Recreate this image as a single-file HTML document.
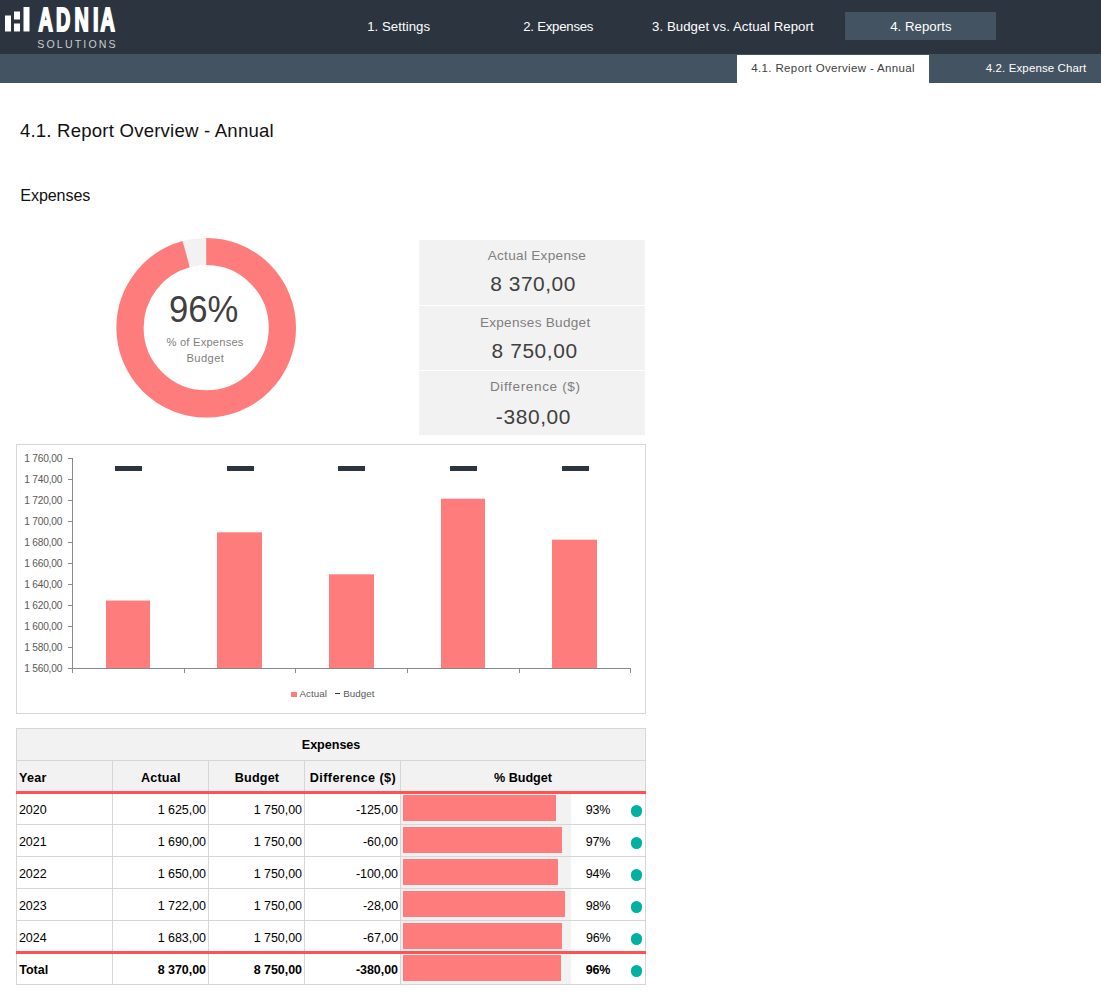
<!DOCTYPE html>
<html lang="en">
<head>
<meta charset="utf-8">
<title>4.1. Report Overview - Annual</title>
<style>
html,body{margin:0;padding:0;background:#fff;}
body{position:relative;width:1101px;height:999px;overflow:hidden;font-family:"Liberation Sans", sans-serif;color:#000;}
.r{position:absolute;display:block;}
.t{position:absolute;white-space:nowrap;line-height:1;}
</style>
</head>
<body>
<div class="r" style="left:0px;top:0px;width:1101px;height:54px;background:#2C353F;"></div>
<div class="r" style="left:0px;top:54px;width:1101px;height:29px;background:#445361;"></div>
<div class="r" style="left:845px;top:12px;width:151px;height:28px;background:#445361;"></div>
<div class="r" style="left:737px;top:55px;width:192px;height:28px;background:#FFFFFF;"></div>
<svg class="r" style="left:0;top:0" width="130" height="54" viewBox="0 0 130 54">
<rect x="5" y="15.5" width="6" height="16" fill="#fff"/>
<rect x="14" y="11.5" width="6" height="8" fill="#fff"/>
<rect x="14" y="23.5" width="6" height="8" fill="#fff"/>
<rect x="23.5" y="7" width="6" height="24.5" fill="#fff"/>
<text transform="scale(0.6 1)" x="64.3 93.5 124 154.9 167.4" y="30.6" font-family='"Liberation Sans", sans-serif' font-weight="700" font-size="33" fill="#fff" stroke="#fff" stroke-width="1.8" stroke-linejoin="miter" vector-effect="non-scaling-stroke">ADNIA</text>
<text x="37.2" y="47.8" font-family='"Liberation Sans", sans-serif' font-size="10.6" fill="#C9CCCF" textLength="78.5" lengthAdjust="spacing">SOLUTIONS</text>
</svg>
<div class="t" style="left:367.14px;top:20px;font-size:13.2px;color:#fff;letter-spacing:0.057px;">1. Settings</div>
<div class="t" style="left:523.19px;top:20px;font-size:13.2px;color:#fff;letter-spacing:-0.231px;">2. Expenses</div>
<div class="t" style="left:652.12px;top:20px;font-size:13.2px;color:#fff;letter-spacing:0.063px;">3. Budget vs. Actual Report</div>
<div class="t" style="left:890.13px;top:20px;font-size:13.2px;color:#fff;letter-spacing:0.065px;">4. Reports</div>
<div class="t" style="left:751.32px;top:63px;font-size:11.5px;color:#404040;letter-spacing:0.355px;">4.1. Report Overview - Annual</div>
<div class="t" style="left:985.77px;top:63px;font-size:11.5px;color:#fff;letter-spacing:0.116px;">4.2. Expense Chart</div>
<div class="t" style="left:19.88px;top:122px;font-size:18.6px;color:#111;letter-spacing:0.205px;">4.1. Report Overview - Annual</div>
<div class="t" style="left:20.30px;top:187px;font-size:16.1px;color:#111;letter-spacing:-0.096px;">Expenses</div>
<svg class="r" style="left:100px;top:225px" width="220" height="205" viewBox="100 225 220 205">
<circle cx="206.2" cy="327.7" r="76.20" fill="none" stroke="#F2F2F2" stroke-width="27.20"/>
<circle cx="206.2" cy="327.7" r="76.20" fill="none" stroke="#FF7C7C" stroke-width="27.20" stroke-dasharray="457.71 478.78" transform="rotate(-90 206.2 327.7)"/>
</svg>
<div class="t" style="left:168.85px;top:291px;font-size:37px;color:#404040;transform:scaleX(0.9369);transform-origin:0 0;">96%</div>
<div class="t" style="left:166.50px;top:337px;font-size:11.2px;color:#7F7F7F;letter-spacing:0.195px;">% of Expenses</div>
<div class="t" style="left:186.40px;top:353px;font-size:11.2px;color:#7F7F7F;letter-spacing:0.417px;">Budget</div>
<div class="r" style="left:419px;top:240px;width:226px;height:195px;background:#F2F2F2;"></div>
<div class="r" style="left:419px;top:305px;width:226px;height:1px;background:#fff;"></div>
<div class="r" style="left:419px;top:370px;width:226px;height:1px;background:#fff;"></div>
<div class="t" style="left:487.70px;top:249px;font-size:13.6px;color:#7F7F7F;letter-spacing:0.286px;">Actual Expense</div>
<div class="t" style="left:490.18px;top:274px;font-size:20.9px;color:#404040;letter-spacing:0.558px;">8 370,00</div>
<div class="t" style="left:479.88px;top:316px;font-size:13.6px;color:#7F7F7F;letter-spacing:0.270px;">Expenses Budget</div>
<div class="t" style="left:491.61px;top:341px;font-size:20.9px;color:#404040;letter-spacing:0.588px;">8 750,00</div>
<div class="t" style="left:489.88px;top:380px;font-size:13.6px;color:#7F7F7F;letter-spacing:0.615px;">Difference ($)</div>
<div class="t" style="left:495.87px;top:407px;font-size:20.9px;color:#404040;letter-spacing:0.618px;">-380,00</div>
<div class="r" style="left:16px;top:444px;width:628px;height:268px;border:1px solid #D6D6D6;background:#fff"></div>
<svg class="r" style="left:0;top:440px" width="660" height="280" viewBox="0 440 660 280" shape-rendering="crispEdges">
<rect x="106" y="600.55" width="44" height="67.95" fill="#FF7C7C" shape-rendering="auto"/>
<rect x="115" y="466" width="27" height="5" fill="#2C353F"/>
<rect x="217" y="532.30" width="45" height="136.20" fill="#FF7C7C" shape-rendering="auto"/>
<rect x="227" y="466" width="27" height="5" fill="#2C353F"/>
<rect x="329" y="574.30" width="45" height="94.20" fill="#FF7C7C" shape-rendering="auto"/>
<rect x="338" y="466" width="27" height="5" fill="#2C353F"/>
<rect x="441" y="498.70" width="44" height="169.80" fill="#FF7C7C" shape-rendering="auto"/>
<rect x="450" y="466" width="27" height="5" fill="#2C353F"/>
<rect x="552" y="539.65" width="45" height="128.85" fill="#FF7C7C" shape-rendering="auto"/>
<rect x="562" y="466" width="27" height="5" fill="#2C353F"/>
<rect x="72" y="458" width="1" height="211" fill="#8A8A8A"/>
<rect x="72" y="668" width="559" height="1" fill="#8A8A8A"/>
<rect x="68" y="458" width="4" height="1" fill="#8A8A8A"/>
<rect x="68" y="479" width="4" height="1" fill="#8A8A8A"/>
<rect x="68" y="500" width="4" height="1" fill="#8A8A8A"/>
<rect x="68" y="521" width="4" height="1" fill="#8A8A8A"/>
<rect x="68" y="542" width="4" height="1" fill="#8A8A8A"/>
<rect x="68" y="563" width="4" height="1" fill="#8A8A8A"/>
<rect x="68" y="584" width="4" height="1" fill="#8A8A8A"/>
<rect x="68" y="605" width="4" height="1" fill="#8A8A8A"/>
<rect x="68" y="626" width="4" height="1" fill="#8A8A8A"/>
<rect x="68" y="647" width="4" height="1" fill="#8A8A8A"/>
<rect x="68" y="668" width="4" height="1" fill="#8A8A8A"/>
<rect x="72" y="669" width="1" height="4" fill="#8A8A8A"/>
<rect x="184" y="669" width="1" height="4" fill="#8A8A8A"/>
<rect x="295" y="669" width="1" height="4" fill="#8A8A8A"/>
<rect x="407" y="669" width="1" height="4" fill="#8A8A8A"/>
<rect x="519" y="669" width="1" height="4" fill="#8A8A8A"/>
<rect x="630" y="669" width="1" height="4" fill="#8A8A8A"/>
<rect x="291" y="692" width="6" height="5" fill="#FF7C7C"/>
<rect x="335" y="693" width="5" height="1" fill="#2C353F"/>
</svg>
<div class="t" style="left:24.30px;top:454px;font-size:10.2px;color:#595959;letter-spacing:-0.236px;">1 760,00</div>
<div class="t" style="left:24.25px;top:475px;font-size:10.2px;color:#595959;letter-spacing:-0.217px;">1 740,00</div>
<div class="t" style="left:24.30px;top:496px;font-size:10.2px;color:#595959;letter-spacing:-0.236px;">1 720,00</div>
<div class="t" style="left:24.30px;top:517px;font-size:10.2px;color:#595959;letter-spacing:-0.236px;">1 700,00</div>
<div class="t" style="left:24.30px;top:538px;font-size:10.2px;color:#595959;letter-spacing:-0.236px;">1 680,00</div>
<div class="t" style="left:24.30px;top:559px;font-size:10.2px;color:#595959;letter-spacing:-0.236px;">1 660,00</div>
<div class="t" style="left:24.25px;top:580px;font-size:10.2px;color:#595959;letter-spacing:-0.217px;">1 640,00</div>
<div class="t" style="left:24.30px;top:601px;font-size:10.2px;color:#595959;letter-spacing:-0.236px;">1 620,00</div>
<div class="t" style="left:24.30px;top:622px;font-size:10.2px;color:#595959;letter-spacing:-0.236px;">1 600,00</div>
<div class="t" style="left:24.29px;top:643px;font-size:10.2px;color:#595959;letter-spacing:-0.235px;">1 580,00</div>
<div class="t" style="left:24.29px;top:664px;font-size:10.2px;color:#595959;letter-spacing:-0.235px;">1 560,00</div>
<div class="t" style="left:299.57px;top:689px;font-size:9.8px;color:#595959;letter-spacing:0.005px;">Actual</div>
<div class="t" style="left:343.28px;top:689px;font-size:9.8px;color:#595959;letter-spacing:0.012px;">Budget</div>
<div class="r" style="left:16px;top:728px;width:630px;height:257px;background:#D6D6D6;"></div>
<div class="r" style="left:17px;top:729px;width:628px;height:31px;background:#F2F2F2;"></div>
<div class="r" style="left:17px;top:761px;width:95px;height:30px;background:#F2F2F2;"></div>
<div class="r" style="left:113px;top:761px;width:95px;height:30px;background:#F2F2F2;"></div>
<div class="r" style="left:209px;top:761px;width:95px;height:30px;background:#F2F2F2;"></div>
<div class="r" style="left:305px;top:761px;width:95px;height:30px;background:#F2F2F2;"></div>
<div class="r" style="left:401px;top:761px;width:244px;height:30px;background:#F2F2F2;"></div>
<div class="r" style="left:16px;top:791px;width:630px;height:3px;background:#FF5252;"></div>
<div class="r" style="left:17px;top:794px;width:95px;height:30px;background:#fff;"></div>
<div class="r" style="left:113px;top:794px;width:95px;height:30px;background:#fff;"></div>
<div class="r" style="left:209px;top:794px;width:95px;height:30px;background:#fff;"></div>
<div class="r" style="left:305px;top:794px;width:95px;height:30px;background:#fff;"></div>
<div class="r" style="left:401px;top:794px;width:244px;height:30px;background:#fff;"></div>
<div class="r" style="left:17px;top:825px;width:95px;height:31px;background:#fff;"></div>
<div class="r" style="left:113px;top:825px;width:95px;height:31px;background:#fff;"></div>
<div class="r" style="left:209px;top:825px;width:95px;height:31px;background:#fff;"></div>
<div class="r" style="left:305px;top:825px;width:95px;height:31px;background:#fff;"></div>
<div class="r" style="left:401px;top:825px;width:244px;height:31px;background:#fff;"></div>
<div class="r" style="left:17px;top:857px;width:95px;height:31px;background:#fff;"></div>
<div class="r" style="left:113px;top:857px;width:95px;height:31px;background:#fff;"></div>
<div class="r" style="left:209px;top:857px;width:95px;height:31px;background:#fff;"></div>
<div class="r" style="left:305px;top:857px;width:95px;height:31px;background:#fff;"></div>
<div class="r" style="left:401px;top:857px;width:244px;height:31px;background:#fff;"></div>
<div class="r" style="left:17px;top:889px;width:95px;height:31px;background:#fff;"></div>
<div class="r" style="left:113px;top:889px;width:95px;height:31px;background:#fff;"></div>
<div class="r" style="left:209px;top:889px;width:95px;height:31px;background:#fff;"></div>
<div class="r" style="left:305px;top:889px;width:95px;height:31px;background:#fff;"></div>
<div class="r" style="left:401px;top:889px;width:244px;height:31px;background:#fff;"></div>
<div class="r" style="left:17px;top:921px;width:95px;height:30px;background:#fff;"></div>
<div class="r" style="left:113px;top:921px;width:95px;height:30px;background:#fff;"></div>
<div class="r" style="left:209px;top:921px;width:95px;height:30px;background:#fff;"></div>
<div class="r" style="left:305px;top:921px;width:95px;height:30px;background:#fff;"></div>
<div class="r" style="left:401px;top:921px;width:244px;height:30px;background:#fff;"></div>
<div class="r" style="left:16px;top:951px;width:630px;height:3px;background:#FF5252;"></div>
<div class="r" style="left:17px;top:954px;width:95px;height:30px;background:#fff;"></div>
<div class="r" style="left:113px;top:954px;width:95px;height:30px;background:#fff;"></div>
<div class="r" style="left:209px;top:954px;width:95px;height:30px;background:#fff;"></div>
<div class="r" style="left:305px;top:954px;width:95px;height:30px;background:#fff;"></div>
<div class="r" style="left:401px;top:954px;width:244px;height:30px;background:#fff;"></div>
<div class="t" style="left:301.79px;top:739px;font-size:12.6px;font-weight:700;letter-spacing:-0.036px;">Expenses</div>
<div class="t" style="left:18.90px;top:772px;font-size:12.6px;font-weight:700;letter-spacing:0.337px;">Year</div>
<div class="t" style="left:140.94px;top:772px;font-size:12.6px;font-weight:700;letter-spacing:0.207px;">Actual</div>
<div class="t" style="left:234.79px;top:772px;font-size:12.6px;font-weight:700;letter-spacing:0.180px;">Budget</div>
<div class="t" style="left:309.79px;top:772px;font-size:12.6px;font-weight:700;letter-spacing:0.411px;">Difference ($)</div>
<div class="t" style="left:493.96px;top:772px;font-size:12.6px;font-weight:700;letter-spacing:-0.010px;">% Budget</div>
<div class="r" style="left:401px;top:794px;width:170px;height:30px;background:#F2F2F2;"></div>
<div class="r" style="left:403px;top:795px;width:153px;height:26px;background:#FF7C7C;"></div>
<div class="t" style="left:18.92px;top:804px;font-size:12.5px;">2020</div>
<div class="t" style="left:157.76px;top:804px;font-size:12.5px;letter-spacing:-0.060px;">1 625,00</div>
<div class="t" style="left:253.76px;top:804px;font-size:12.5px;letter-spacing:-0.060px;">1 750,00</div>
<div class="t" style="left:355.94px;top:804px;font-size:12.5px;letter-spacing:-0.060px;">-125,00</div>
<div class="t" style="left:585.84px;top:804px;font-size:12.5px;letter-spacing:-0.200px;">93%</div>
<div class="r" style="left:630.5px;top:805.1px;width:11.7px;height:11.7px;border-radius:50%;background:#00B0A0"></div>
<div class="r" style="left:401px;top:825px;width:170px;height:31px;background:#F2F2F2;"></div>
<div class="r" style="left:403px;top:827px;width:159px;height:26px;background:#FF7C7C;"></div>
<div class="t" style="left:18.92px;top:836px;font-size:12.5px;">2021</div>
<div class="t" style="left:157.76px;top:836px;font-size:12.5px;letter-spacing:-0.060px;">1 690,00</div>
<div class="t" style="left:253.76px;top:836px;font-size:12.5px;letter-spacing:-0.060px;">1 750,00</div>
<div class="t" style="left:362.92px;top:836px;font-size:12.5px;letter-spacing:-0.060px;">-60,00</div>
<div class="t" style="left:585.84px;top:836px;font-size:12.5px;letter-spacing:-0.200px;">97%</div>
<div class="r" style="left:630.5px;top:837.1px;width:11.7px;height:11.7px;border-radius:50%;background:#00B0A0"></div>
<div class="r" style="left:401px;top:857px;width:170px;height:31px;background:#F2F2F2;"></div>
<div class="r" style="left:403px;top:859px;width:155px;height:26px;background:#FF7C7C;"></div>
<div class="t" style="left:18.92px;top:868px;font-size:12.5px;">2022</div>
<div class="t" style="left:157.76px;top:868px;font-size:12.5px;letter-spacing:-0.060px;">1 650,00</div>
<div class="t" style="left:253.76px;top:868px;font-size:12.5px;letter-spacing:-0.060px;">1 750,00</div>
<div class="t" style="left:355.94px;top:868px;font-size:12.5px;letter-spacing:-0.060px;">-100,00</div>
<div class="t" style="left:585.84px;top:868px;font-size:12.5px;letter-spacing:-0.200px;">94%</div>
<div class="r" style="left:630.5px;top:869.1px;width:11.7px;height:11.7px;border-radius:50%;background:#00B0A0"></div>
<div class="r" style="left:401px;top:889px;width:170px;height:31px;background:#F2F2F2;"></div>
<div class="r" style="left:403px;top:891px;width:162px;height:26px;background:#FF7C7C;"></div>
<div class="t" style="left:18.92px;top:900px;font-size:12.5px;">2023</div>
<div class="t" style="left:157.76px;top:900px;font-size:12.5px;letter-spacing:-0.060px;">1 722,00</div>
<div class="t" style="left:253.76px;top:900px;font-size:12.5px;letter-spacing:-0.060px;">1 750,00</div>
<div class="t" style="left:362.94px;top:900px;font-size:12.5px;letter-spacing:-0.060px;">-28,00</div>
<div class="t" style="left:585.84px;top:900px;font-size:12.5px;letter-spacing:-0.200px;">98%</div>
<div class="r" style="left:630.5px;top:901.1px;width:11.7px;height:11.7px;border-radius:50%;background:#00B0A0"></div>
<div class="r" style="left:401px;top:921px;width:170px;height:30px;background:#F2F2F2;"></div>
<div class="r" style="left:403px;top:923px;width:159px;height:26px;background:#FF7C7C;"></div>
<div class="t" style="left:18.92px;top:932px;font-size:12.5px;">2024</div>
<div class="t" style="left:157.76px;top:932px;font-size:12.5px;letter-spacing:-0.060px;">1 683,00</div>
<div class="t" style="left:253.76px;top:932px;font-size:12.5px;letter-spacing:-0.060px;">1 750,00</div>
<div class="t" style="left:362.94px;top:932px;font-size:12.5px;letter-spacing:-0.060px;">-67,00</div>
<div class="t" style="left:585.95px;top:932px;font-size:12.5px;letter-spacing:-0.200px;">96%</div>
<div class="r" style="left:630.5px;top:933.1px;width:11.7px;height:11.7px;border-radius:50%;background:#00B0A0"></div>
<div class="r" style="left:401px;top:954px;width:170px;height:30px;background:#F2F2F2;"></div>
<div class="r" style="left:403px;top:955px;width:158px;height:26px;background:#FF7C7C;"></div>
<div class="t" style="left:19.25px;top:964px;font-size:12.5px;font-weight:700;">Total</div>
<div class="t" style="left:157.78px;top:964px;font-size:12.5px;font-weight:700;letter-spacing:-0.060px;">8 370,00</div>
<div class="t" style="left:253.78px;top:964px;font-size:12.5px;font-weight:700;letter-spacing:-0.060px;">8 750,00</div>
<div class="t" style="left:355.98px;top:964px;font-size:12.5px;font-weight:700;letter-spacing:-0.060px;">-380,00</div>
<div class="t" style="left:585.83px;top:964px;font-size:12.5px;font-weight:700;letter-spacing:-0.200px;">96%</div>
<div class="r" style="left:630.5px;top:965.1px;width:11.7px;height:11.7px;border-radius:50%;background:#00B0A0"></div>
</body>
</html>
